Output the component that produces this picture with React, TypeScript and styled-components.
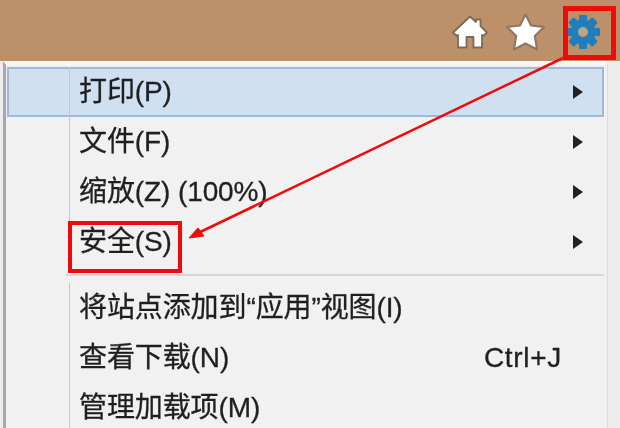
import React from "react";
import styled, { createGlobalStyle } from "styled-components";

const Global = createGlobalStyle`
  html, body { margin: 0; padding: 0; background: #ededed; }
  body { font-family: "Liberation Sans", "Noto Sans CJK SC", sans-serif; }
`;
const Page = styled.div`
  position: relative; width: 620px; height: 428px; overflow: hidden;
  background: #ededed; display: flex; flex-direction: column;
`;
const Toolbar = styled.div`
  height: 61px; flex: none; background: #bc9068; box-sizing: border-box;
  display: flex; justify-content: flex-end; align-items: center;
  padding: 3px 20px 0 0; filter: blur(0.5px);
`;
const Icon = styled.svg<{ $gap?: number }>`
  display: block; flex: none; margin-left: ${p => p.$gap ?? 0}px;
`;
const Menu = styled.div`
  width: 605px; height: 367px; margin-left: 3px; box-sizing: border-box; flex: none;
  background: #f1f1f1; border-left: 3px solid #a8a8a8; border-top: 4px solid #f7f7f7;
  border-right: 1px solid #dcdcdc; padding: 2px 3px 0 1px;
  display: flex; flex-direction: column; filter: blur(0.5px);
`;
const Row = styled.div<{ $active?: boolean }>`
  height: 50px; flex: none; box-sizing: border-box; display: flex; align-items: center;
  padding-right: 21px;
  font-size: 28px; letter-spacing: -0.1px; color: #1f1f1f; -webkit-text-stroke: 0.3px #1f1f1f;
  ${p => p.$active ? `
    background: #cfe0f0; box-shadow: inset 0 0 0 2px #9dbbd9;
  ` : ""}
`;
const Gutter = styled.span`
  width: 63px; align-self: stretch; flex: none; box-sizing: border-box; border-right: 1px solid #c6c6c6;
`;
const Label = styled.span`
  flex: 1; padding-left: 9px; white-space: nowrap; line-height: 1;
`;
const Arrow = styled.span`
  width: 0; height: 0; border-left: 10px solid #222; flex: none;
  border-top: 7px solid transparent; border-bottom: 7px solid transparent;
`;
const Shortcut = styled.span`
  letter-spacing: 0.7px; margin-right: 21px;
`;
const Separator = styled.div`
  height: 2px; flex: none; margin: 7px 0 7px 59px; background: #d8d8d8;
`;
const Highlight = styled.div<{ $x: number; $y: number; $w: number; $h: number; $t: number }>`
  position: absolute; box-sizing: border-box; border: ${p => p.$t}px solid #ee0b0b;
  left: ${p => p.$x}px; top: ${p => p.$y}px; width: ${p => p.$w}px; height: ${p => p.$h}px;
`;
const Overlay = styled.svg`
  position: absolute; left: 0; top: 0; pointer-events: none;
`;

const Home = () => (
  <Icon width="36" height="36" viewBox="0 0 36 36">
    <path d="M18 2.5 L24 8 V5.5 H28.5 V12 L35 18.5 L31 22 L30 21 V33.5 H21.5 V23 H14.5 V33.5 H6 V21 L5 22 L1 18.5 Z" fill="#fff" stroke="#7d6a58" strokeWidth="1.8" strokeLinejoin="round" />
  </Icon>
);
const Star = () => (
  <Icon $gap={18} width="39" height="38" viewBox="0 0 39 38">
    <path d="M19.5 1.5 L25 12.5 L38 14 L28.8 23 L31 36.5 L19.5 30.5 L8 36.5 L10.2 23 L1 14 L14 12.5 Z" fill="#fff" stroke="#8a7663" strokeWidth="2" strokeLinejoin="round" />
  </Icon>
);
const Gear = () => (
  <Icon $gap={21} width="34" height="36" viewBox="0 0 34 36">
    <g fill="#1f7fbd">
      {[0, 45, 90, 135, 180, 225, 270, 315].map(a => (
        <rect key={a} x="13" y="1" width="8" height="34" rx="1.5" transform={`rotate(${a} 17 18)`} />
      ))}
      <circle cx="17" cy="18" r="12.5" />
    </g>
    <circle cx="17" cy="18" r="5" fill="#c2a27f" />
  </Icon>
);

export default function App() {
  return (
    <Page>
      <Global />
      <Toolbar>
        <Home />
        <Star />
        <Gear />
      </Toolbar>
      <Menu>
        <Row $active><Gutter /><Label>打印(P)</Label><Arrow /></Row>
        <Row><Gutter /><Label>文件(F)</Label><Arrow /></Row>
        <Row><Gutter /><Label>缩放(Z) (100%)</Label><Arrow /></Row>
        <Row><Gutter /><Label>安全(S)</Label><Arrow /></Row>
        <Separator />
        <Row><Gutter /><Label>将站点添加到“应用”视图(I)</Label></Row>
        <Row><Gutter /><Label>查看下载(N)</Label><Shortcut>Ctrl+J</Shortcut></Row>
        <Row><Gutter /><Label>管理加载项(M)</Label></Row>
      </Menu>
      <Highlight $x={563} $y={6} $w={53} $h={54} $t={5} />
      <Highlight $x={68} $y={221} $w={114} $h={52} $t={4} />
      <Overlay width="620" height="428" viewBox="0 0 620 428">
        <line x1="563" y1="58" x2="194" y2="235" stroke="#ee0b0b" strokeWidth="2.5" />
        <path d="M189 238 L204 236 L198 228 Z" fill="#ee0b0b" stroke="#ee0b0b" strokeWidth="1" />
      </Overlay>
    </Page>
  );
}
